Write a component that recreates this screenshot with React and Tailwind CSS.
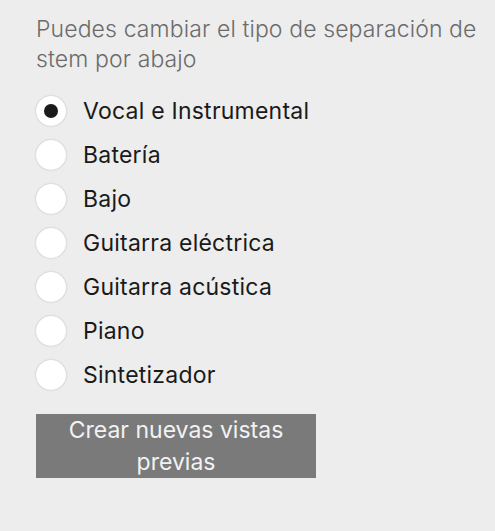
import { useState } from "react";

const options = [
    "Vocal e Instrumental",
    "Batería",
    "Bajo",
    "Guitarra eléctrica",
    "Guitarra acústica",
    "Piano",
    "Sintetizador",
];

export default function App() {
    const [selected, setSelected] = useState(0);

    return (
        <div className="min-h-[531px] w-full bg-[#ededed] pl-9 pr-4 pt-[14px] font-['Inter',sans-serif]">
            <p className="text-[23px] font-light leading-[30px] tracking-[0.005em] text-[#6b6b6b]">
                Puedes cambiar el tipo de separación de stem por abajo
            </p>

            <ul className="mt-[15px] flex flex-col">
                {options.map((label, idx) => (
                    <li key={label}>
                        <button
                            type="button"
                            onClick={() => setSelected(idx)}
                            className="flex h-11 items-center gap-[17px] text-left"
                        >
                            <span className="flex h-[30px] w-[30px] items-center justify-center rounded-full bg-white shadow-[0_0_2px_rgba(0,0,0,0.25)]">
                                {selected === idx && (
                                    <span className="h-[14px] w-[14px] rounded-full bg-[#1a1a1a]" />
                                )}
                            </span>
                            <span className="text-[23px] tracking-[0.01em] text-[#1a1a1a]">{label}</span>
                        </button>
                    </li>
                ))}
            </ul>

            <button
                type="button"
                className="mt-[17px] w-[280px] bg-[#7a7a7a] text-center text-[23px] leading-[32px] text-[#f2f2f2]"
            >
                Crear nuevas vistas previas
            </button>
        </div>
    );
}
